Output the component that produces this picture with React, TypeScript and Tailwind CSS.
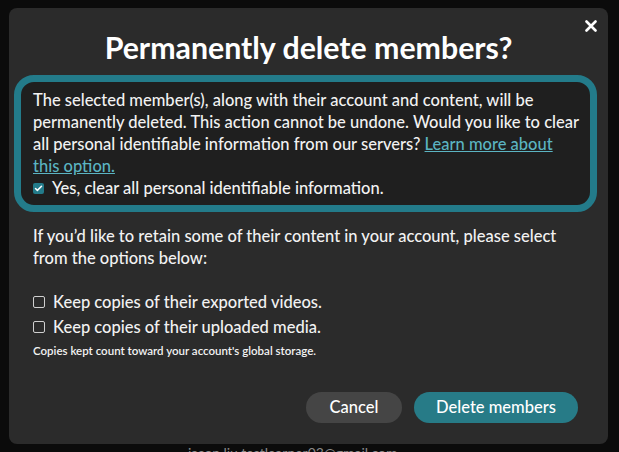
import { Check } from 'lucide-react';

const font = { fontFamily: 'Lato, "Open Sans", sans-serif' };

const Box = ({ checked }: { checked?: boolean }) =>
  checked ? (
    <span className="flex h-[11px] w-[11px] flex-shrink-0 items-center justify-center rounded-[2px] bg-[#237b8a]">
      <Check className="h-[9px] w-[9px] text-white" strokeWidth={4} />
    </span>
  ) : (
    <span className="h-[12px] w-[12px] flex-shrink-0 rounded-[2px] border border-[#cfcfcf]" />
  );

const App = () => {
  return (
    <div className="h-[452px] w-full overflow-hidden bg-[#0b0b0b] text-[#f2f2f2]" style={font}>
      <div className="relative ml-[9px] mt-[8px] h-[436px] w-[599px] rounded-[8px] bg-[#2b2b2b]">
        <button className="absolute right-[11px] top-[12px] flex h-[12px] w-[12px] items-center justify-center">
          <svg viewBox="0 0 12 12" className="h-[12px] w-[12px]">
            <path d="M1.5 1.5 L10.5 10.5 M10.5 1.5 L1.5 10.5" stroke="#fff" strokeWidth="2.6" strokeLinecap="round" />
          </svg>
        </button>

        <h2 className="pt-[21px] text-center text-[30.3px] font-bold leading-[36px] text-white">
          Permanently delete members?
        </h2>

        <div className="ml-[5px] mt-[10px] w-[583px] rounded-[20px] border-[7px] border-[#237b8a] bg-[#1f1f1f] pb-[6px] pl-[12px] pr-[8px] pt-[7px] text-[16.5px] font-medium leading-[22px]">
          <p>
            The selected member(s), along with their account and content, will be permanently deleted. This action
            cannot be undone. Would you like to clear all personal identifiable information from our servers?{' '}
            <a className="text-[#5bb4c2] underline">Learn more about this option.</a>
          </p>
          <label className="flex items-center gap-[8px]">
            <Box checked />
            <span>Yes, clear all personal identifiable information.</span>
          </label>
        </div>

        <div className="pl-[24px] pr-[30px] text-[16.5px] font-medium leading-[22px]">
          <p className="mt-[13px]">
            If you’d like to retain some of their content in your account, please select from the options below:
          </p>
          <div className="mt-[22px] flex flex-col gap-[3px]">
            <label className="flex items-center gap-[8px]">
              <Box />
              <span>Keep copies of their exported videos.</span>
            </label>
            <label className="flex items-center gap-[8px]">
              <Box />
              <span>Keep copies of their uploaded media.</span>
            </label>
          </div>
          <p className="mt-[5px] text-[11.5px] font-semibold leading-[16px]">
            Copies kept count toward your account's global storage.
          </p>
        </div>

        <div className="mr-[30px] mt-[33px] flex justify-end gap-[12px] text-[16.5px] font-medium">
          <button className="h-[31px] w-[96px] rounded-full bg-[#454545] text-white">Cancel</button>
          <button className="h-[31px] w-[164px] rounded-full bg-[#277b87] text-white">Delete members</button>
        </div>
      </div>
      <p className="ml-[188px] mt-[1px] text-[14px] leading-[16px] text-[#8a8a8a]">jason.liu.testlearner03@gmail.com</p>
    </div>
  );
};

export default App;
